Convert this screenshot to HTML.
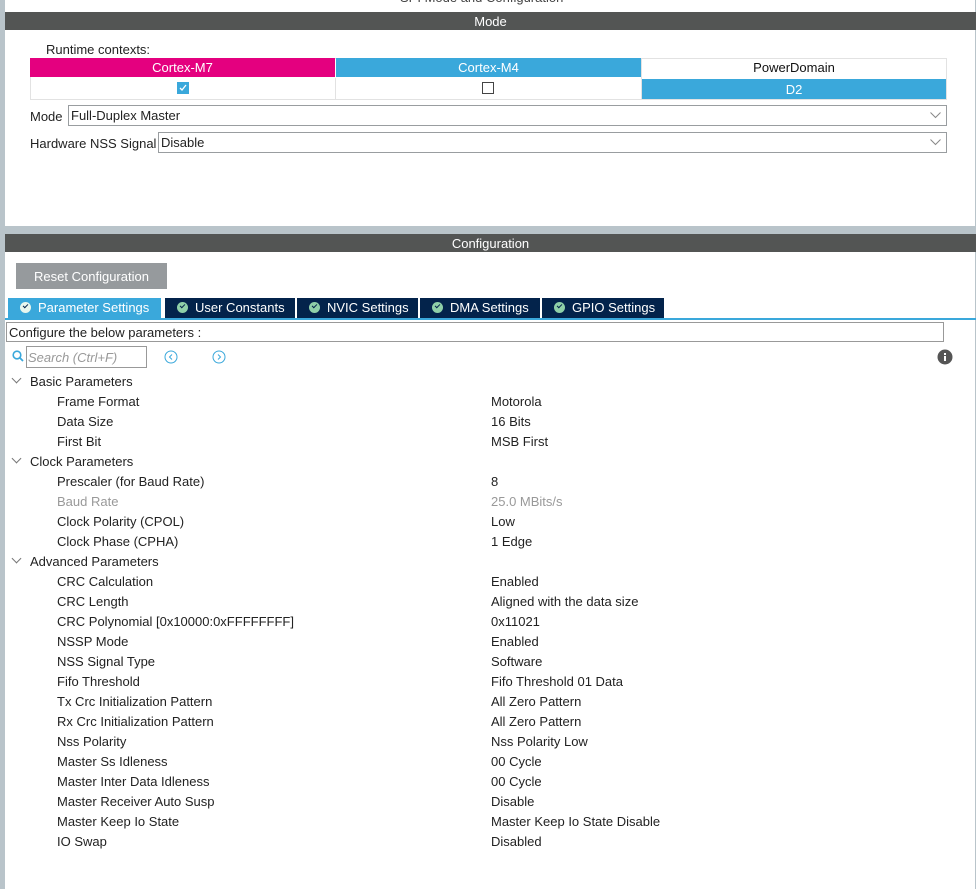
<!DOCTYPE html>
<html><head><style>
*{margin:0;padding:0;box-sizing:border-box}
body{width:976px;height:889px;background:#fff;font-family:"Liberation Sans",sans-serif;font-size:13px;color:#222;position:relative;overflow:hidden}
.abs{position:absolute}
.bar{position:absolute;left:5px;width:971px;height:18px;background:#535554;color:#fff;text-align:center;line-height:19px;font-size:13px}
.cell{position:absolute;text-align:center;line-height:20px;height:19px}
.sel{position:absolute;height:21px;border:1px solid #999da0;background:#fff;line-height:20px;padding-left:2px}
.sel svg{position:absolute;right:5px;top:6px}
.tab{position:absolute;top:298px;height:20px;background:#03234b;color:#fff;line-height:20px;padding-left:12px;font-size:13px}
.tab i{display:inline-block;width:11px;height:11px;border-radius:50%;background:#8fd0a8;vertical-align:-1px;margin-right:7px;position:relative}
.tab i:after{content:"";position:absolute;left:3px;top:2px;width:4px;height:2px;border-left:1.5px solid #03234b;border-bottom:1.5px solid #03234b;transform:rotate(-45deg)}
.r{position:absolute;height:20px;line-height:22px;white-space:nowrap}
.h{left:30px}.k{left:57px}.v{left:491px}
.chev{position:absolute;left:13px;width:7px;height:7px;border-right:1px solid #777;border-bottom:1px solid #777;transform:rotate(45deg)}
</style></head><body>
<div class="abs" style="left:0;top:0;width:5px;height:889px;background:#b9c4ca"></div>
<div class="abs" style="left:975px;top:0;width:1px;height:889px;background:#b9c4ca"></div>
<div class="abs" style="left:400px;top:-10px;color:#444">SPI Mode and Configuration</div>
<div class="bar" style="top:12px">Mode</div>
<div class="abs" style="left:46px;top:42px">Runtime contexts:</div>
<div class="abs" style="left:30px;top:58px;width:917px;height:42px;border:1px solid #e2e2e2"></div>
<div class="cell" style="left:30px;top:58px;width:305px;background:#e4007f;color:#fff">Cortex-M7</div>
<div class="cell" style="left:336px;top:58px;width:305px;background:#3aa8db;color:#fff">Cortex-M4</div>
<div class="cell" style="left:642px;top:58px;width:304px;color:#111">PowerDomain</div>
<div class="abs" style="left:335px;top:78px;width:1px;height:22px;background:#e2e2e2"></div>
<div class="abs" style="left:641px;top:58px;width:1px;height:42px;background:#e2e2e2"></div>
<div class="abs" style="left:177px;top:82px;width:12px;height:12px;background:#3aa8db"><svg width="12" height="12"><path d="M3 6l2 2 4-5" stroke="#fff" stroke-width="1.3" fill="none"/></svg></div>
<div class="abs" style="left:482px;top:82px;width:12px;height:12px;border:1px solid #444"></div>
<div class="cell" style="left:642px;top:79px;width:304px;height:20px;line-height:21px;background:#3aa8db;color:#fff">D2</div>
<div class="abs" style="left:30px;top:109px">Mode</div>
<div class="sel" style="left:68px;top:105px;width:879px">Full-Duplex Master<svg width="11" height="7"><path d="M0.5 0.5l5 5 5-5" stroke="#888" fill="none"/></svg></div>
<div class="abs" style="left:30px;top:136px">Hardware NSS Signal</div>
<div class="sel" style="left:158px;top:132px;width:789px">Disable<svg width="11" height="7"><path d="M0.5 0.5l5 5 5-5" stroke="#888" fill="none"/></svg></div>
<div class="abs" style="left:5px;top:226px;width:971px;height:8px;background:#b9c4ca"></div>
<div class="bar" style="top:234px">Configuration</div>
<div class="abs" style="left:16px;top:263px;width:151px;height:26px;background:#969a9d;color:#fff;line-height:27px;text-align:center">Reset Configuration</div>
<div class="tab" style="left:8px;width:153px;background:#3aa8db"><i style="background:#e8f6ee"></i>Parameter Settings</div>
<div class="tab" style="left:165px;width:130px"><i></i>User Constants</div>
<div class="tab" style="left:297px;width:121px"><i></i>NVIC Settings</div>
<div class="tab" style="left:420px;width:120px"><i></i>DMA Settings</div>
<div class="tab" style="left:542px;width:122px"><i></i>GPIO Settings</div>
<div class="abs" style="left:5px;top:318px;width:971px;height:2px;background:#3aa8db"></div>
<div class="abs" style="left:6px;top:322px;width:938px;height:20px;border:1px solid #999;line-height:19px;padding-left:2px">Configure the below parameters :</div>
<svg class="abs" style="left:12px;top:350px" width="12" height="12"><circle cx="5" cy="5" r="3.8" stroke="#3aa8db" stroke-width="1.6" fill="none"/><path d="M8 8l3 3" stroke="#3aa8db" stroke-width="1.8"/></svg>
<div class="abs" style="left:26px;top:346px;width:121px;height:22px;border:1px solid #999;color:#999;font-style:italic;line-height:21px;padding-left:1px">Search (Ctrl+F)</div>
<svg class="abs" style="left:164px;top:350px" width="14" height="14"><circle cx="7" cy="7" r="6" stroke="#3aa8db" fill="none"/><path d="M8 4.5l-2.5 2.5 2.5 2.5" stroke="#3aa8db" fill="none"/></svg>
<svg class="abs" style="left:212px;top:350px" width="14" height="14"><circle cx="7" cy="7" r="6" stroke="#3aa8db" fill="none"/><path d="M6 4.5l2.5 2.5-2.5 2.5" stroke="#3aa8db" fill="none"/></svg>
<svg class="abs" style="left:937px;top:349px" width="16" height="16"><circle cx="8" cy="8" r="7.5" fill="#555"/><rect x="7" y="7" width="2" height="5" fill="#fff"/><rect x="7" y="4" width="2" height="2" fill="#fff"/></svg>
<div class="chev" style="top:375px"></div><div class="r h" style="top:371px">Basic Parameters</div>
<div class="r k" style="top:391px">Frame Format</div><div class="r v" style="top:391px">Motorola</div>
<div class="r k" style="top:411px">Data Size</div><div class="r v" style="top:411px">16 Bits</div>
<div class="r k" style="top:431px">First Bit</div><div class="r v" style="top:431px">MSB First</div>
<div class="chev" style="top:455px"></div><div class="r h" style="top:451px">Clock Parameters</div>
<div class="r k" style="top:471px">Prescaler (for Baud Rate)</div><div class="r v" style="top:471px">8</div>
<div class="r k" style="top:491px;color:#999">Baud Rate</div><div class="r v" style="top:491px;color:#999">25.0 MBits/s</div>
<div class="r k" style="top:511px">Clock Polarity (CPOL)</div><div class="r v" style="top:511px">Low</div>
<div class="r k" style="top:531px">Clock Phase (CPHA)</div><div class="r v" style="top:531px">1 Edge</div>
<div class="chev" style="top:555px"></div><div class="r h" style="top:551px">Advanced Parameters</div>
<div class="r k" style="top:571px">CRC Calculation</div><div class="r v" style="top:571px">Enabled</div>
<div class="r k" style="top:591px">CRC Length</div><div class="r v" style="top:591px">Aligned with the data size</div>
<div class="r k" style="top:611px">CRC Polynomial [0x10000:0xFFFFFFFF]</div><div class="r v" style="top:611px">0x11021</div>
<div class="r k" style="top:631px">NSSP Mode</div><div class="r v" style="top:631px">Enabled</div>
<div class="r k" style="top:651px">NSS Signal Type</div><div class="r v" style="top:651px">Software</div>
<div class="r k" style="top:671px">Fifo Threshold</div><div class="r v" style="top:671px">Fifo Threshold 01 Data</div>
<div class="r k" style="top:691px">Tx Crc Initialization Pattern</div><div class="r v" style="top:691px">All Zero Pattern</div>
<div class="r k" style="top:711px">Rx Crc Initialization Pattern</div><div class="r v" style="top:711px">All Zero Pattern</div>
<div class="r k" style="top:731px">Nss Polarity</div><div class="r v" style="top:731px">Nss Polarity Low</div>
<div class="r k" style="top:751px">Master Ss Idleness</div><div class="r v" style="top:751px">00 Cycle</div>
<div class="r k" style="top:771px">Master Inter Data Idleness</div><div class="r v" style="top:771px">00 Cycle</div>
<div class="r k" style="top:791px">Master Receiver Auto Susp</div><div class="r v" style="top:791px">Disable</div>
<div class="r k" style="top:811px">Master Keep Io State</div><div class="r v" style="top:811px">Master Keep Io State Disable</div>
<div class="r k" style="top:831px">IO Swap</div><div class="r v" style="top:831px">Disabled</div>
</body></html>
